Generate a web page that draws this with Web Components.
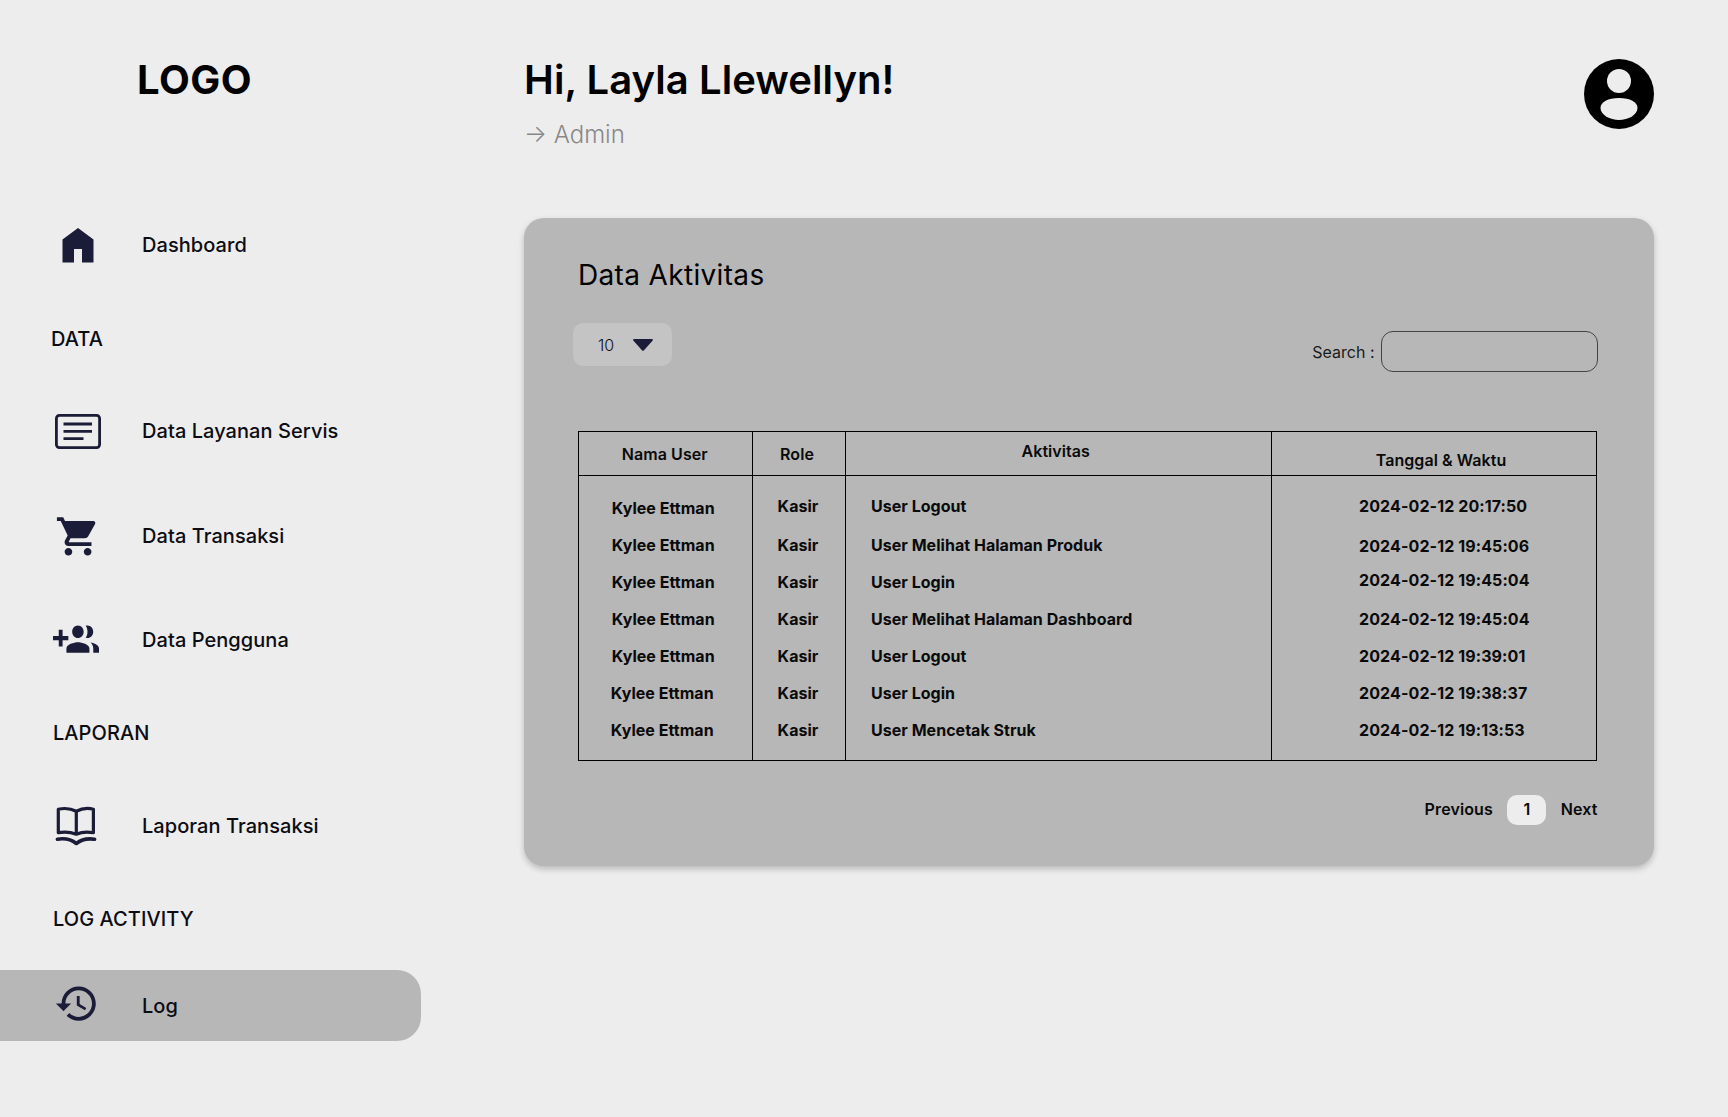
<!DOCTYPE html>
<html lang="id">
<head>
<meta charset="utf-8">
<title>Log Aktivitas</title>
<style>
    html, body { margin: 0; background: #ededed; }
    body { font-family: Inter, "Liberation Sans", sans-serif; color: #000; }
    svg { display: block; }
</style>
</head>
<body>
<app-shell>
    <side-nav slot="side">
        <nav-section style="margin-bottom:.5px">
            <nav-item label="Dashboard">
                <svg slot="icon" width="48" height="48" viewBox="0 0 48 48" fill="#1b1c37"><path d="M24 7 39.5 18.5V41.5H28V28H20V41.5H8.5V18.5Z"/></svg>
            </nav-item>
        </nav-section>
        <nav-section heading="DATA" style="--label-x:51px">
            <nav-item label="Data Layanan Servis">
                <svg slot="icon" width="48" height="48" viewBox="0 0 48 48" fill="none" stroke="#1b1c37" stroke-width="2.8"><rect x="2.4" y="8.4" width="43.2" height="32.2" rx="3"/><path d="M9.5 17H38M9.5 24.3H38M9.5 31.7H29.5"/></svg>
            </nav-item>
            <nav-item label="Data Transaksi">
                <svg slot="icon" width="48" height="48" viewBox="-0.52 -0.7 25 25" fill="#1b1c37"><path d="M7 18c-1.1 0-1.99.9-1.99 2S5.9 22 7 22s2-.9 2-2-.9-2-2-2zM1 2v2h2l3.6 7.59-1.35 2.45c-.16.28-.25.61-.25.96 0 1.1.9 2 2 2h12v-2H7.42c-.14 0-.25-.11-.25-.25l.03-.12.9-1.63h7.45c.75 0 1.41-.41 1.75-1.03l3.58-6.47c.08-.14.12-.31.12-.48 0-.55-.45-1-1-1H5.21l-.94-2H1zm16 16c-1.1 0-1.99.9-1.99 2s.89 2 1.99 2 2-.9 2-2-.9-2-2-2z"/></svg>
            </nav-item>
            <nav-item label="Data Pengguna">
                <svg slot="icon" width="48" height="48" viewBox="0.52 0.48 25.04 22.86" preserveAspectRatio="none" overflow="visible" fill="#1b1c37"><path d="M8 10H5V7H3v3H0v2h3v3h2v-3h3v-2zm10 1c1.66 0 2.99-1.34 2.99-3S19.66 5 18 5c-.32 0-.63.05-.91.14.57.81.9 1.79.9 2.86s-.34 2.04-.9 2.86c.28.09.59.14.91.14zm-5 0c1.66 0 2.99-1.34 2.99-3S14.66 5 13 5s-3 1.34-3 3 1.34 3 3 3zm6.62 2.16c.83.73 1.38 1.66 1.38 2.84v2h3v-2c0-1.54-2.37-2.49-4.38-2.84zM13 13c-2 0-6 1-6 3v2h12v-2c0-2-4-3-6-3z"/></svg>
            </nav-item>
        </nav-section>
        <nav-section heading="LAPORAN">
            <nav-item label="Laporan Transaksi">
                <svg slot="icon" width="48" height="48" viewBox="0 -1.2 48 48" overflow="visible" fill="none" stroke="#1b1c37" stroke-width="3.2" stroke-linejoin="round"><path d="M4.3 6C10 4.8 17 5.3 22.3 8 27.6 5.3 34.6 4.8 39.4 6V29.5C34 28.5 27 29 22.3 31 17 29 10 28.5 4.3 29.5ZM22.3 8V31"/><path d="M3.4 36C10 35 17 36 22.3 40.3 27.6 36 34 35 40.6 36" stroke-width="3.6" stroke-linecap="round"/></svg>
            </nav-item>
        </nav-section>
        <nav-section heading="LOG ACTIVITY" style="--label-gap:39.5px">
            <nav-item label="Log" active>
                <svg slot="icon" width="48" height="48" viewBox="0 0.63 25.26 25.26" fill="#1b1c37"><path d="M13 3c-4.97 0-9 4.03-9 9H1l3.89 3.89.07.14L9 12H6c0-3.87 3.13-7 7-7s7 3.13 7 7-3.13 7-7 7c-1.93 0-3.68-.79-4.94-2.06l-1.42 1.42C8.27 19.99 10.51 21 13 21c4.97 0 9-4.03 9-9s-4.03-9-9-9zm-1 5v5l4.28 2.54.72-1.21-3.5-2.08V8H12z"/></svg>
            </nav-item>
        </nav-section>
    </side-nav>
    <page-header name="Layla Llewellyn" role="Admin"></page-header>
    <data-card heading="Data Aktivitas">
        <log-table></log-table>
    </data-card>
</app-shell>

<script>
class AppShell extends HTMLElement {
    constructor() {
        super();
        this.attachShadow({ mode: 'open' });
        this.shadowRoot.innerHTML = `
            <style>
                :host { display: grid; grid-template-columns: 524px 1130px; min-height: 1117px; }
                main { display: flex; flex-direction: column; }
            </style>
            <slot name="side"></slot>
            <main><slot></slot></main>
        `;
    }
}

class SideNav extends HTMLElement {
    constructor() {
        super();
        this.attachShadow({ mode: 'open' });
        this.shadowRoot.innerHTML = `
            <style>
                :host { display: flex; flex-direction: column; }
                .logo {
                    height: 48px;
                    margin: 56px 0 105.5px 137px;
                    font-size: 40px;
                    line-height: 48px;
                    font-weight: 700;
                    letter-spacing: .5px;
                }
                .list { display: flex; flex-direction: column; gap: 45.5px; }
            </style>
            <div class="logo">LOGO</div>
            <div class="list"><slot></slot></div>
        `;
    }
}

class NavSection extends HTMLElement {
    constructor() {
        super();
        this.attachShadow({ mode: 'open' });
        const heading = this.getAttribute('heading');
        this.shadowRoot.innerHTML = `
            <style>
                :host { display: flex; flex-direction: column; }
                .label {
                    height: 24px;
                    margin-left: var(--label-x, 53px);
                    margin-bottom: var(--label-gap, 45px);
                    font-size: 20px;
                    line-height: 24px;
                    font-weight: 500;
                    letter-spacing: .06px;
                    color: #0c0c12;
                }
                .items { display: flex; flex-direction: column; gap: 33.5px; }
            </style>
            ${heading ? `<div class="label">${heading}</div>` : ''}
            <div class="items"><slot></slot></div>
        `;
    }
}

class NavItem extends HTMLElement {
    constructor() {
        super();
        this.attachShadow({ mode: 'open' });
        this.shadowRoot.innerHTML = `
            <style>
                :host {
                    display: flex;
                    align-items: center;
                    gap: 40px;
                    height: 71px;
                    width: 421px;
                    padding-left: 54px;
                    box-sizing: border-box;
                    border-radius: 0 24px 24px 0;
                    font-size: 20px;
                    font-weight: 500;
                    letter-spacing: .06px;
                    color: #0c0c12;
                }
                :host([active]) { background: #b7b7b7; }
                .icon { width: 48px; height: 48px; flex: none; }
            </style>
            <div class="icon"><slot name="icon"></slot></div>
            <span>${this.getAttribute('label')}</span>
        `;
    }
}

class PageHeader extends HTMLElement {
    constructor() {
        super();
        this.attachShadow({ mode: 'open' });
        this.shadowRoot.innerHTML = `
            <style>
                :host {
                    display: flex;
                    justify-content: space-between;
                    align-items: flex-start;
                    height: 218px;
                    flex: none;
                    padding-top: 56px;
                    box-sizing: border-box;
                }
                h1 { margin: 0; font-size: 40px; line-height: 48px; font-weight: 600; letter-spacing: .06px; color: #000; }
                .role { margin-top: 16px; font-size: 24px; line-height: 29px; font-weight: 300; color: #888; }
                svg { display: block; margin-top: 3px; }
            </style>
            <div>
                <h1>Hi, ${this.getAttribute('name')}!</h1>
                <div class="role">→ ${this.getAttribute('role')}</div>
            </div>
            <svg width="70" height="70" viewBox="0 0 70 70">
                <circle cx="35" cy="35" r="35" fill="#000"/>
                <circle cx="35" cy="22" r="12" fill="#ededed"/>
                <path d="M16.5 49C16.5 43 24 39 35 39S53.5 43 53.5 49C53.5 56 44 61 35 61S16.5 56 16.5 49Z" fill="#ededed"/>
            </svg>
        `;
    }
}

class DataCard extends HTMLElement {
    constructor() {
        super();
        this.attachShadow({ mode: 'open' });
        this.shadowRoot.innerHTML = `
            <style>
                :host {
                    display: block;
                    padding: 40px 56.5px 41px 54px;
                    background: #b7b7b7;
                    border-radius: 20px;
                    box-shadow: 0 3px 6px rgba(0, 0, 0, .22);
                }
                h2 { margin: 0; font-size: 28px; line-height: 34px; font-weight: 400; letter-spacing: .34px; color: #000; }
                .controls { display: flex; justify-content: space-between; margin: 31px 0 59px -5px; }
                .select {
                    display: flex;
                    align-items: center;
                    width: 99px;
                    height: 43px;
                    padding-left: 25px;
                    box-sizing: border-box;
                    border-radius: 10px;
                    background: #c4c4c4;
                    font-size: 16px;
                    font-weight: 300;
                    color: #111;
                }
                .select svg { margin-left: 19px; }
                .search {
                    display: flex;
                    align-items: center;
                    gap: 6.5px;
                    margin-top: 8px;
                    font-size: 16px;
                    color: #1a1a1a;
                }
                input {
                    width: 216.5px;
                    height: 41px;
                    padding: 0 12px;
                    box-sizing: border-box;
                    border: 1.5px solid #444;
                    border-radius: 12px;
                    background: transparent;
                    outline: none;
                }
                .pager {
                    display: flex;
                    justify-content: flex-end;
                    align-items: center;
                    gap: 14.5px;
                    margin-top: 34px;
                    font-size: 16px;
                    font-weight: 600;
                    letter-spacing: .1px;
                    color: #0a0a0a;
                }
                .pager span { padding-bottom: 2px; }
                .pager .current {
                    width: 39px;
                    height: 30px;
                    padding: 0;
                    border-radius: 10px;
                    background: #ededed;
                    text-align: center;
                    line-height: 29px;
                }
            </style>
            <h2>${this.getAttribute('heading')}</h2>
            <div class="controls">
                <div class="select">
                    <span>10</span>
                    <svg width="20" height="12" viewBox="0 0 20 12" fill="#1b1c37"><path d="M1.2 0H18.8C19.8 0 20.2 1 19.5 1.7L10.8 11.4C10.4 11.9 9.6 11.9 9.2 11.4L.5 1.7C-.2 1 .2 0 1.2 0Z"/></svg>
                </div>
                <label class="search">Search : <input type="text"></label>
            </div>
            <slot></slot>
            <div class="pager">
                <span>Previous</span>
                <span class="current">1</span>
                <span>Next</span>
            </div>
        `;
    }
}

// [user dx, role dy, date dy] the rows in the design are not quite lined up
const LOG_ROWS = [
    ['Kylee Ettman', 'Kasir', 'User Logout', '2024-02-12 20:17:50', 0, -2, -2],
    ['Kylee Ettman', 'Kasir', 'User Melihat Halaman Produk', '2024-02-12 19:45:06', 0, 0, 1],
    ['Kylee Ettman', 'Kasir', 'User Login', '2024-02-12 19:45:04', 0, 0, -2],
    ['Kylee Ettman', 'Kasir', 'User Melihat Halaman Dashboard', '2024-02-12 19:45:04', 0, 0, 0],
    ['Kylee Ettman', 'Kasir', 'User Logout', '2024-02-12 19:39:01', 0, 0, 0],
    ['Kylee Ettman', 'Kasir', 'User Login', '2024-02-12 19:38:37', -1, 0, 0],
    ['Kylee Ettman', 'Kasir', 'User Mencetak Struk', '2024-02-12 19:13:53', -1, 0, 0],
];

class LogTable extends HTMLElement {
    constructor() {
        super();
        this.attachShadow({ mode: 'open' });
        const cell = (text, dx, dy) =>
            `<span style="margin-left:${dx * 2}px;margin-top:${dy * 2}px">${text}</span>`;
        const rows = LOG_ROWS.map(([user, role, act, date, ux, rdy, ddy]) => `
            <tr>
                <td>${cell(user, -2 + ux, 0)}</td>
                <td>${cell(role, -0.5, rdy)}</td>
                <td class="act">${cell(act, 0, rdy)}</td>
                <td class="date">${cell(date, 0, ddy)}</td>
            </tr>`).join('');
        this.shadowRoot.innerHTML = `
            <style>
                :host { display: block; }
                table {
                    width: 1018px;
                    table-layout: fixed;
                    border-collapse: collapse;
                    font-size: 16px;
                    line-height: 20px;
                    font-weight: 600;
                    color: #0a0a0a;
                }
                th, td { padding: 0; border-left: 1px solid #000; border-right: 1px solid #000; text-align: center; }
                th { height: 43px; font-weight: 600; letter-spacing: .06px; border-top: 1px solid #000; border-bottom: 1px solid #000; }
                td { height: 37px; font-weight: 700; letter-spacing: .03px; box-sizing: border-box; }
                span { display: block; }
                tbody tr:first-child td { height: 51px; padding-top: 14px; }
                tbody tr:last-child td { height: 49px; padding-bottom: 12px; border-bottom: 1px solid #000; }
                .act { text-align: left; padding-left: 25.5px; }
                .date { text-align: left; padding-left: 87px; letter-spacing: .1px; }
            </style>
            <table>
                <colgroup><col style="width:173.5px"><col style="width:93px"><col style="width:426.5px"><col style="width:325px"></colgroup>
                <thead>
                    <tr>
                        <th>${cell('Nama User', -0.5, 0)}</th>
                        <th>${cell('Role', -1.5, 0)}</th>
                        <th>${cell('Aktivitas', -2.5, -3)}</th>
                        <th>${cell('Tanggal &amp; Waktu', 7, 6)}</th>
                    </tr>
                </thead>
                <tbody>${rows}</tbody>
            </table>
        `;
    }
}

customElements.define('app-shell', AppShell);
customElements.define('side-nav', SideNav);
customElements.define('nav-section', NavSection);
customElements.define('nav-item', NavItem);
customElements.define('page-header', PageHeader);
customElements.define('data-card', DataCard);
customElements.define('log-table', LogTable);
</script>
</body>
</html>
